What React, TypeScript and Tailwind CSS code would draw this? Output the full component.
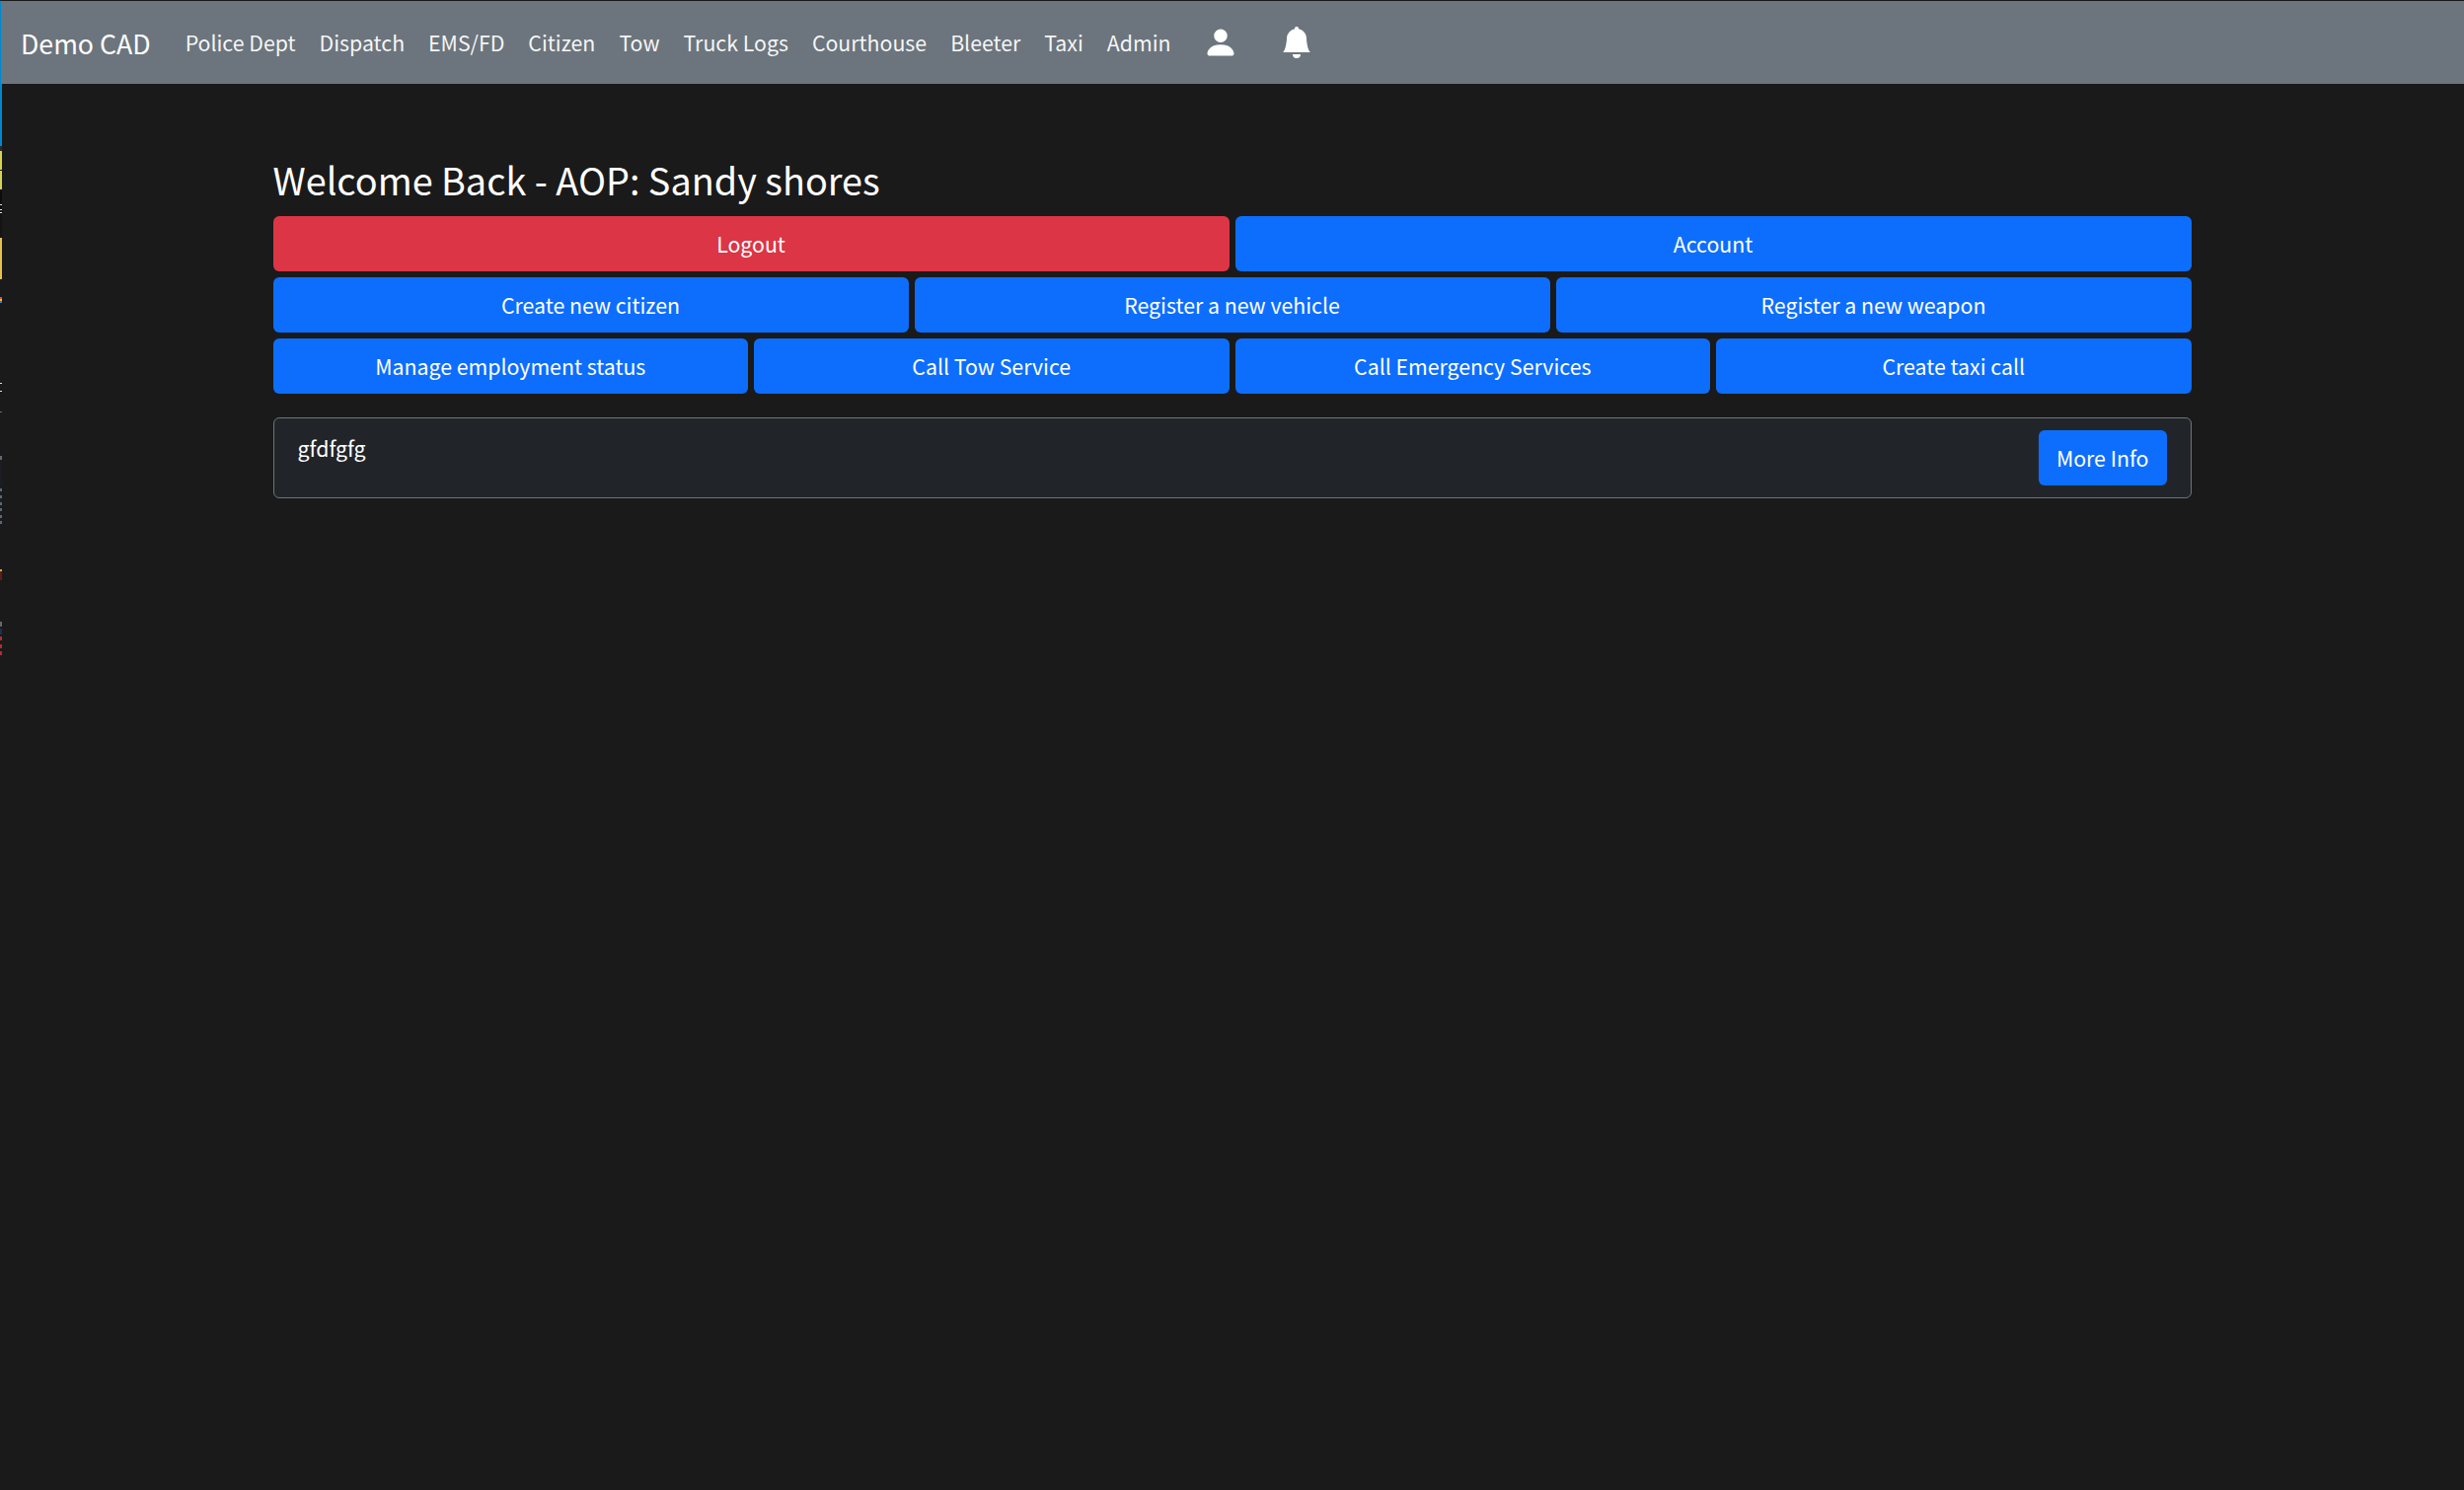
import { BsBellFill, BsPersonFill } from 'react-icons/bs';

const navLinks = [
    'Police Dept',
    'Dispatch',
    'EMS/FD',
    'Citizen',
    'Tow',
    'Truck Logs',
    'Courthouse',
    'Bleeter',
    'Taxi',
    'Admin',
];

const rows = [
    ['Logout', 'Account'],
    ['Create new citizen', 'Register a new vehicle', 'Register a new weapon'],
    ['Manage employment status', 'Call Tow Service', 'Call Emergency Services', 'Create taxi call'],
];

// the sliver of another window that shows along the left edge
const sliver = [
    'h-[63px] bg-[#0088d0]',
    'h-[5px] bg-[#2a2a2a]',
    'h-[19px] bg-[#d8d050]',
    'h-px bg-[#111111]',
    'h-[19px] bg-[#d8d050]',
    'h-[15px] bg-[#0c0c0c]',
    'h-px bg-[#e0e0e0]',
    'h-[4px] bg-[#0c0c0c]',
    'h-px bg-[#e0e0e0]',
    'h-[2px] bg-[#0c0c0c]',
    'h-px bg-[#e0e0e0]',
    'h-[25px] bg-[#141414]',
    'h-[42px] bg-[#e8c050]',
    'h-[18px] bg-[#1a1a1a]',
    'h-[2px] bg-[#e05030]',
    'h-[2px] bg-[#e0c040]',
    'h-[2px] bg-[#3080d0]',
    'h-[81px] bg-[#1a1a1a]',
    'h-px bg-[#e0e0e0]',
    'h-[7px] bg-[#1a1a1a]',
    'h-px bg-[#e0e0e0]',
    'h-[20px] bg-[#1a1a1a]',
    'h-px bg-[#707070]',
    'h-[44px] bg-[#1a1a1a]',
    'h-[4px] bg-[#606870]',
    'h-[29px] bg-[#1a1e22]',
    'h-[3px] bg-[#606870]',
    'h-[4px] bg-[#1a1e22]',
    'h-[3px] bg-[#606870]',
    'h-[4px] bg-[#1a1e22]',
    'h-[3px] bg-[#606870]',
    'h-[3px] bg-[#1a1e22]',
    'h-[3px] bg-[#606870]',
    'h-[4px] bg-[#1a1e22]',
    'h-[3px] bg-[#606870]',
    'h-[3px] bg-[#1a1e22]',
    'h-[3px] bg-[#606870]',
    'h-[46px] bg-[#1a1a1a]',
    'h-[2px] bg-[#e0a040]',
    'h-[9px] bg-[#601c1c]',
    'h-[42px] bg-[#1a1a1a]',
    'h-[5px] bg-[#606870]',
    'h-[2px] bg-[#1a1a1a]',
    'h-[6px] bg-[#1c3050]',
    'h-[2px] bg-[#1a1a1a]',
    'h-[4px] bg-[#b02c3c]',
    'h-[4px] bg-[#1a1a1a]',
    'h-[4px] bg-[#b02c3c]',
    'h-[3px] bg-[#1a1a1a]',
    'h-[4px] bg-[#b02c3c]',
];

function Btn({ label, className }: { label: string; className: string }) {
    return (
        <a className={`flex h-[56px] items-center justify-center rounded-[6px] px-[18px] text-[21.3px] leading-[36px] text-white ${className}`}>
            {label}
        </a>
    );
}

export default function App() {
    return (
        <div className="relative min-h-[1510px] bg-[#1a1a1a] pt-px font-['Noto_Sans_CJK_SC','Noto_Sans',sans-serif] text-white">
            <div className="absolute top-[85px] left-0 flex w-[2px] flex-col">
                {sliver.map((seg, i) => (
                    <div key={i} className={seg} />
                ))}
            </div>

            <nav className="flex h-[84px] items-center border-l border-[#0088d0] bg-[#6c757d] pl-[20px]">
                <span className="mr-[23px] text-[26.7px] leading-[45px]">Demo CAD</span>
                <ul className="flex items-center">
                    {navLinks.map((link) => (
                        <li key={link} className="px-[12px] text-[21.3px] leading-[36px] text-white/95">
                            {link}
                        </li>
                    ))}
                    <li className="ml-[20px]">
                        <BsPersonFill className="h-[36px] w-[36px]" />
                    </li>
                    <li className="ml-[43px]">
                        <BsBellFill className="h-[32px] w-[32px]" />
                    </li>
                </ul>
            </nav>

            <main className="mx-auto w-[1944px] pt-[72px]">
                <h3 className="mb-[12px] text-[37.8px] leading-[50px]">Welcome Back - AOP: Sandy shores</h3>
                <div className="flex flex-col gap-[6px]">
                    {rows.map((row) => (
                        <div key={row[0]} className="flex gap-[6px]">
                            {row.map((label) => (
                                <Btn
                                    key={label}
                                    label={label}
                                    className={`flex-1 ${label === 'Logout' ? 'bg-[#dc3545]' : 'bg-[#0d6efd]'}`}
                                />
                            ))}
                        </div>
                    ))}
                </div>
                <div className="mt-[24px] flex h-[82px] items-center justify-between rounded-[6px] border border-[#6c757d] bg-[#212529] px-[24px]">
                    <p className="self-start pt-[12px] text-[21.3px] leading-[36px]">gfdfgfg</p>
                    <Btn label="More Info" className="bg-[#0d6efd]" />
                </div>
            </main>
        </div>
    );
}
